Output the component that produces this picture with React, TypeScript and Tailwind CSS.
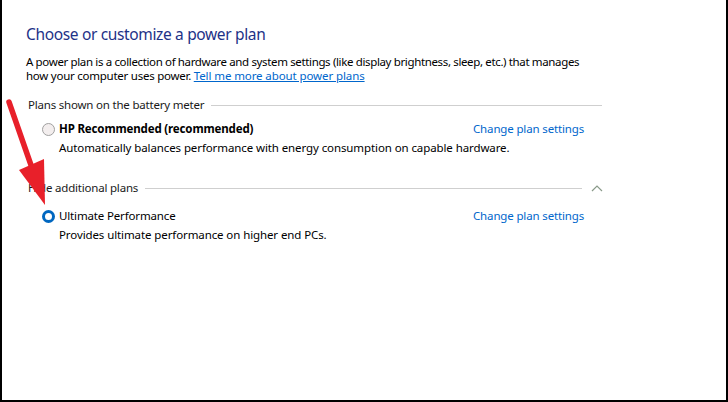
import React from "react";

const font = { fontFamily: '"Noto Sans", "Liberation Sans", sans-serif' };

function Section({ label, chevron }: { label: string; chevron?: boolean }) {
  return (
    <div className="flex items-center h-[16px] pl-[2px]">
      <span className="text-[11.5px] tracking-[-0.2px] text-[#1a1a1a] whitespace-nowrap">{label}</span>
      <div className="flex-1 ml-[7px] h-px bg-[#cfcfcf]" />
      {chevron && (
        <svg width="12" height="8" viewBox="0 0 12 8" className="ml-[9px] mr-[-1px]">
          <path d="M1 7 L6 2 L11 7" fill="none" stroke="#8a9a8a" strokeWidth="1.2" />
        </svg>
      )}
    </div>
  );
}

export default function App() {
  return (
    <div
      className="relative w-[728px] h-[402px] bg-white border-l-2 border-r-2 border-b-2 border-black overflow-hidden box-border"
      style={font}
    >
      <div className="pl-[24px] pt-[25px] w-[600px]">
        <div className="h-[20px] flex items-center text-[15.5px] tracking-[-0.35px] text-[#1e3287] whitespace-nowrap">
          Choose or customize a power plan
        </div>
        <div className="mt-[10px] text-[11.5px] tracking-[-0.25px] leading-[14px] text-black whitespace-nowrap">
          <span className="tracking-[-0.36px]">
            A power plan is a collection of hardware and system settings (like display brightness, sleep, etc.) that manages
          </span>
          <br />
          how your computer uses power.{" "}
          <span className="text-[#0066cc] underline tracking-[-0.1px]">Tell me more about power plans</span>
        </div>

        <div className="mt-[14px]">
          <Section label="Plans shown on the battery meter" />
        </div>

        <div className="mt-[8px] flex items-center h-[16px] pl-[16px] text-[11.5px] tracking-[-0.15px]">
          <span className="w-[13px] h-[13px] shrink-0 rounded-full border border-[#a0a0a0] bg-[#f3eeee]" />
          <span className="ml-[4px] w-[414px] font-bold text-black whitespace-nowrap">
            HP Recommended (recommended)
          </span>
          <span className="text-[#0066cc] whitespace-nowrap">Change plan settings</span>
        </div>
        <div className="mt-[3px] h-[16px] flex items-center pl-[33px] text-[11.5px] tracking-[-0.1px] text-black whitespace-nowrap">
          Automatically balances performance with energy consumption on capable hardware.
        </div>

        <div className="mt-[24px]">
          <Section label="Hide additional plans" chevron />
        </div>

        <div className="mt-[12px] flex items-center h-[16px] pl-[16px] text-[11.5px] tracking-[-0.15px]">
          <span className="w-[13px] h-[13px] shrink-0 rounded-full border-[3px] border-[#0067c0] bg-white" />
          <span className="ml-[4px] w-[414px] text-black whitespace-nowrap">Ultimate Performance</span>
          <span className="text-[#0066cc] whitespace-nowrap">Change plan settings</span>
        </div>
        <div className="mt-[3px] h-[16px] flex items-center pl-[33px] text-[11.5px] tracking-[-0.1px] text-black whitespace-nowrap">
          Provides ultimate performance on higher end PCs.
        </div>
      </div>

      <svg className="absolute left-0 top-0" width="60" height="220" viewBox="0 0 60 220">
        <line x1="7" y1="102" x2="30" y2="168" stroke="#e8202a" strokeWidth="5.5" strokeLinecap="round" />
        <polygon points="17,170 42,159 43,205" fill="#e8202a" />
      </svg>
    </div>
  );
}
